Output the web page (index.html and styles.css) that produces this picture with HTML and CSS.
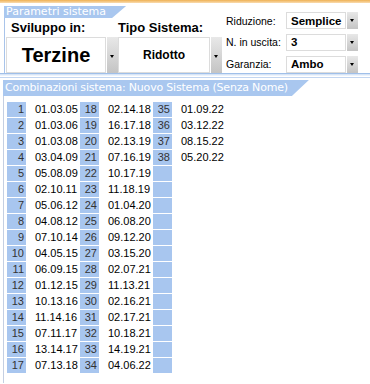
FILE: index.html
```html
<!DOCTYPE html>
<html lang="it">
<head>
    <meta charset="UTF-8">
    <title>Sistemi - Parametri</title>
    <link rel="stylesheet" href="styles.css">
</head>
<body>
<div class="topbar"></div>

<!-- Parametri del sistema -->
<section class="params">
    <div class="params-left">
        <div class="tab tab-small">Parametri sistema</div>
        <div class="params-box">
            <div class="field field-dev">
                <div class="caption">Sviluppo in:</div>
                <div class="combo combo-big">
                    <span class="combo-val">Terzine</span>
                    <span class="combo-btn"></span>
                </div>
            </div>
            <div class="field field-type">
                <div class="caption">Tipo Sistema:</div>
                <div class="combo combo-mid">
                    <span class="combo-val">Ridotto</span>
                    <span class="combo-btn"></span>
                </div>
            </div>
        </div>
    </div>
    <div class="opts">
        <label>Riduzione:</label>
        <div class="combo combo-small"><span class="combo-val">Semplice</span><span class="combo-btn"></span></div>
        <label>N. in uscita:</label>
        <div class="combo combo-small"><span class="combo-val">3</span><span class="combo-btn"></span></div>
        <label>Garanzia:</label>
        <div class="combo combo-small"><span class="combo-val">Ambo</span><span class="combo-btn"></span></div>
    </div>
</section>

<!-- Combinazioni -->
<section class="combos">
    <div class="tab tab-wide">Combinazioni sistema: Nuovo Sistema (Senza Nome)</div>
    <div class="grid" id="combGrid"></div>
</section>

<script>
    // colonne di 17 righe, come nella griglia originale
    let combinazioni = [
        "01.03.05", "01.03.06", "01.03.08", "03.04.09", "05.08.09", "02.10.11", "05.06.12", "04.08.12", "07.10.14",
        "04.05.15", "06.09.15", "01.12.15", "10.13.16", "11.14.16", "07.11.17", "13.14.17", "07.13.18",
        "02.14.18", "16.17.18", "02.13.19", "07.16.19", "10.17.19", "11.18.19", "01.04.20", "06.08.20", "09.12.20",
        "03.15.20", "02.07.21", "11.13.21", "02.16.21", "02.17.21", "10.18.21", "14.19.21", "04.06.22",
        "01.09.22", "03.12.22", "08.15.22", "05.20.22"
    ];
    let rows = 17;

    function renderGrid() {
        let grid = document.getElementById("combGrid");
        let html = "";
        for (let r = 0; r < rows; r++) {
            for (let c = 0; c < 3; c++) {
                let i = c * rows + r;
                let val = combinazioni[i];
                html += `<div class="num">${val ? i + 1 : ""}</div><div class="val">${val || ""}</div>`;
            }
        }
        grid.innerHTML = html;
    }

    renderGrid();
</script>
</body>
</html>
```

FILE: styles.css
```css
body { margin: 0; background: #fff; font-family: "Liberation Sans", Arial, sans-serif; width: 370px; height: 384px; overflow: hidden; }
.topbar { height: 3px; background: linear-gradient(#efb154, #f9dcb0); }

.tab { font-family: "DejaVu Sans", Verdana, sans-serif; font-size: 11px; color: #fff; background: #a9c7ef; white-space: nowrap; }
.tab-small { height: 12px; line-height: 12px; margin-top: 3px; padding: 0 20px 0 2px; width: max-content; clip-path: polygon(0 0, 100% 0, calc(100% - 14px) 100%, 0 100%); }
.tab-wide { height: 16px; line-height: 16px; padding: 0 21px 0 2px; width: max-content; letter-spacing: -0.2px; clip-path: polygon(0 0, 100% 0, calc(100% - 17px) 100%, 0 100%); }

.params { display: flex; padding-left: 4px; border-bottom: 1px solid #9fbfe9; box-shadow: 0 1px 0 #d7e5f7, 0 2px 0 #ecf3fc; }
.params-box { display: flex; border-left: 1px solid #a9c4ea; height: 55px; }
.field { display: flex; flex-direction: column; }
.field-dev { margin-left: 1px; width: 112px; }
.field-type { width: 104px; }
.caption { font-weight: bold; font-size: 13px; height: 19px; line-height: 20px; padding-left: 5px; color: #000; }
.field-type .caption { padding-left: 0; }

.combo { display: flex; }
.combo-val { flex: 1; border: 1px solid #dcdcdc; display: flex; align-items: center; justify-content: center; font-weight: bold; color: #000; }
.combo-btn { width: 11px; margin-left: 1px; background: linear-gradient(#e8e8e8, #c4c4c4); position: relative; }
.combo-btn::after { content: ""; position: absolute; left: 3px; top: 50%; border-left: 2.5px solid transparent; border-right: 2.5px solid transparent; border-top: 3px solid #000; }
.combo-big { height: 36px; }
.combo-big .combo-val { font-size: 20px; }
.combo-mid { height: 36px; }
.combo-mid .combo-val { font-size: 12px; }

.opts { display: grid; grid-template-columns: 60px 72px; row-gap: 4px; align-items: center; padding: 9px 0 0 4px; }
.opts label { font-size: 10.5px; color: #000; }
.combo-small { height: 17px; }
.combo-small .combo-val { justify-content: flex-start; padding-left: 4px; font-size: 11.5px; }
.combo-small .combo-btn::after { top: 7px; }

.combos { margin-top: 3px; border-top: 1px solid #c3d6f1; padding-top: 2px; }
.combos .tab { margin-left: 3px; }
.grid { display: grid; grid-template-columns: repeat(3, 19px 54px); grid-auto-rows: 15px; row-gap: 1px; margin: 0 0 0 3px; padding: 6px 0 10px 3px; border-left: 1px solid #c4cfe2; font-size: 11px; }
.num { background: #a8c6ef; color: #333; text-align: right; padding-right: 2px; line-height: 15px; }
.val { color: #000; padding-left: 9px; line-height: 15px; }
```
